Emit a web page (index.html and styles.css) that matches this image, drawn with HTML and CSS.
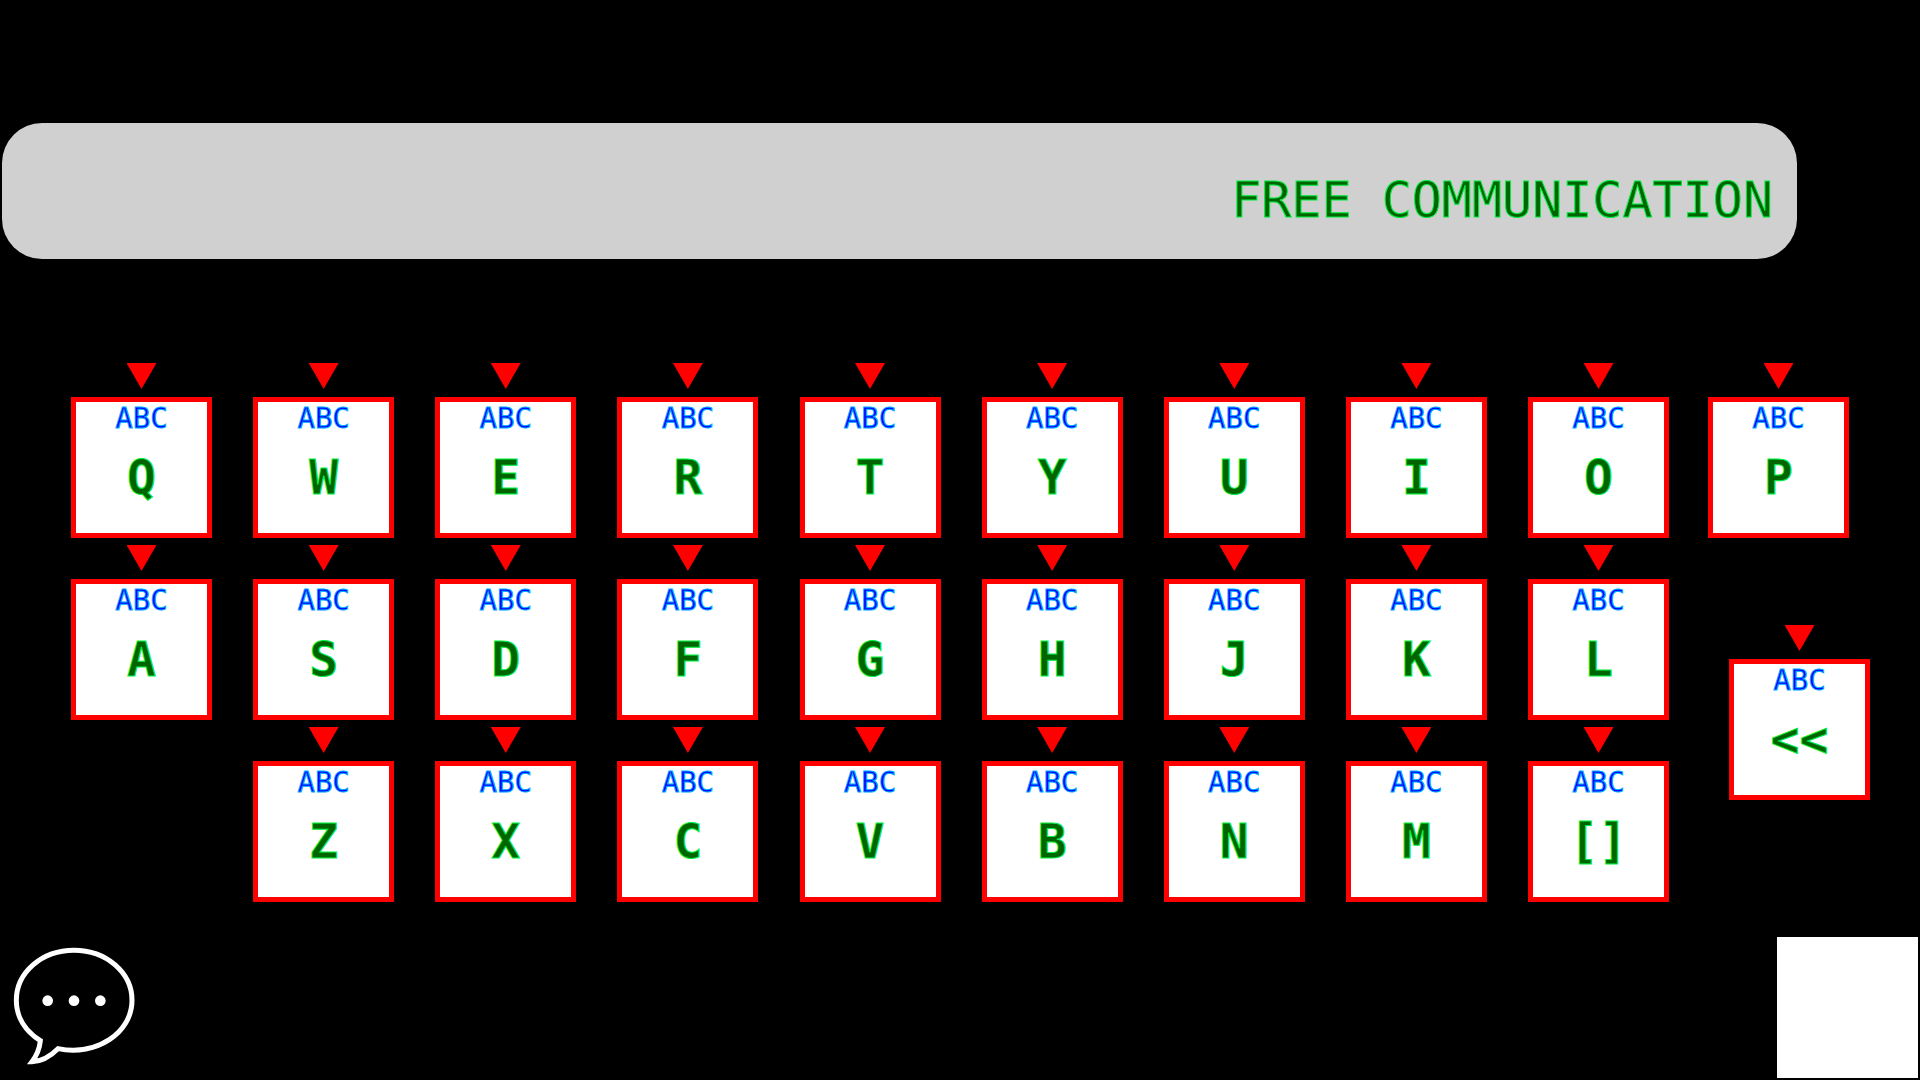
FILE: index.html
```html
<!DOCTYPE html>
<html lang="en">
<head>
<meta charset="utf-8">
<meta name="viewport" content="width=device-width, initial-scale=1">
<title>Free communication</title>
<link rel="stylesheet" href="styles.css">
</head>
<body>
<main class="board">
  <input class="message" type="text" value="FREE COMMUNICATION" aria-label="Message">

  <section class="keyboard" aria-label="Keyboard">
    <div class="letters">
      <div class="key"><button class="cap"><span class="hint">ABC</span><span class="glyph">Q</span></button></div>
      <div class="key"><button class="cap"><span class="hint">ABC</span><span class="glyph">W</span></button></div>
      <div class="key"><button class="cap"><span class="hint">ABC</span><span class="glyph">E</span></button></div>
      <div class="key"><button class="cap"><span class="hint">ABC</span><span class="glyph">R</span></button></div>
      <div class="key"><button class="cap"><span class="hint">ABC</span><span class="glyph">T</span></button></div>
      <div class="key"><button class="cap"><span class="hint">ABC</span><span class="glyph">Y</span></button></div>
      <div class="key"><button class="cap"><span class="hint">ABC</span><span class="glyph">U</span></button></div>
      <div class="key"><button class="cap"><span class="hint">ABC</span><span class="glyph">I</span></button></div>
      <div class="key"><button class="cap"><span class="hint">ABC</span><span class="glyph">O</span></button></div>

      <div class="key"><button class="cap"><span class="hint">ABC</span><span class="glyph">A</span></button></div>
      <div class="key"><button class="cap"><span class="hint">ABC</span><span class="glyph">S</span></button></div>
      <div class="key"><button class="cap"><span class="hint">ABC</span><span class="glyph">D</span></button></div>
      <div class="key"><button class="cap"><span class="hint">ABC</span><span class="glyph">F</span></button></div>
      <div class="key"><button class="cap"><span class="hint">ABC</span><span class="glyph">G</span></button></div>
      <div class="key"><button class="cap"><span class="hint">ABC</span><span class="glyph">H</span></button></div>
      <div class="key"><button class="cap"><span class="hint">ABC</span><span class="glyph">J</span></button></div>
      <div class="key"><button class="cap"><span class="hint">ABC</span><span class="glyph">K</span></button></div>
      <div class="key"><button class="cap"><span class="hint">ABC</span><span class="glyph">L</span></button></div>

      <div class="key key-indent"><button class="cap"><span class="hint">ABC</span><span class="glyph">Z</span></button></div>
      <div class="key"><button class="cap"><span class="hint">ABC</span><span class="glyph">X</span></button></div>
      <div class="key"><button class="cap"><span class="hint">ABC</span><span class="glyph">C</span></button></div>
      <div class="key"><button class="cap"><span class="hint">ABC</span><span class="glyph">V</span></button></div>
      <div class="key"><button class="cap"><span class="hint">ABC</span><span class="glyph">B</span></button></div>
      <div class="key"><button class="cap"><span class="hint">ABC</span><span class="glyph">N</span></button></div>
      <div class="key"><button class="cap"><span class="hint">ABC</span><span class="glyph">M</span></button></div>
      <div class="key"><button class="cap"><span class="hint">ABC</span><span class="glyph">[]</span></button></div>
    </div>
    <div class="side">
      <div class="key"><button class="cap"><span class="hint">ABC</span><span class="glyph">P</span></button></div>
      <div class="key key-delete"><button class="cap"><span class="hint">ABC</span><span class="glyph">&lt;&lt;</span></button></div>
    </div>
  </section>

  <footer class="tools">
    <button class="speak" aria-label="Speak">
      <svg class="bubble" viewBox="40 50 369 354" aria-hidden="true">
        <path d="M175 355C290 378 397 308 397 210C397 127 320 60 223 60C126 60 50 127 50 210C50 260 77 303 122 331C120 352 112 374 97 394C127 393 153 377 175 355Z" fill="none" stroke="#fff" stroke-width="15"/>
        <circle cx="144" cy="211" r="16" fill="#fff"/>
        <circle cx="223" cy="211" r="16" fill="#fff"/>
        <circle cx="302" cy="211" r="16" fill="#fff"/>
      </svg>
    </button>
    <button class="blank" aria-label="Blank"></button>
  </footer>
</main>
</body>
</html>
```
FILE: styles.css
```css
* {
  box-sizing: border-box;
}

body {
  margin: 0;
  background: #000;
  font-family: "DejaVu Sans Mono", monospace;
}

button {
  margin: 0;
  padding: 0;
  border: 0;
  font-family: inherit;
}

.board {
  display: flex;
  flex-direction: column;
  min-height: 100vh;
  padding: 123px 2px 2px;
}

.message {
  height: 136px;
  margin-right: 121px;
  padding: 18px 24px 0;
  border: 0;
  border-radius: 40px;
  background: #d0d0d0;
  color: #006400;
  font-family: inherit;
  font-size: 50px;
  text-align: right;
  -webkit-text-stroke: 1px #00f040;
}

.keyboard {
  display: flex;
  gap: 39px;
  margin-top: 104px;
  padding: 0 48px 0 69px;
}

.letters {
  flex: 1;
  display: grid;
  grid-template-columns: repeat(9, 141px);
  justify-content: space-between;
  row-gap: 7px;
}

.side {
  display: flex;
  flex-direction: column;
  gap: 87px;
  width: 162px;
}

.key {
  display: flex;
  flex-direction: column;
  align-items: center;
  gap: 8px;
  width: 141px;
}

.key::before {
  content: "";
  width: 30px;
  height: 26px;
  background: #f00;
  clip-path: polygon(0 0, 100% 0, 50% 100%);
}

.key-indent {
  grid-column: 2;
}

.key-delete {
  align-self: flex-end;
}

.cap {
  display: flex;
  flex-direction: column;
  align-items: center;
  width: 141px;
  height: 141px;
  border: 5px solid #f00;
  background: #fff;
}

.hint {
  color: #00f;
  font-size: 29px;
  line-height: 32px;
  -webkit-text-stroke: 1px #0af;
}

.glyph {
  margin-top: 15px;
  color: #006400;
  font-size: 48px;
  font-weight: bold;
  line-height: 56px;
  -webkit-text-stroke: 1px #00f040;
}

.tools {
  display: flex;
  align-items: flex-end;
  justify-content: space-between;
  margin-top: auto;
}

.speak {
  margin: 0 0 13px 11px;
  background: none;
}

.bubble {
  display: block;
  width: 123px;
  height: 118px;
}

.blank {
  width: 141px;
  height: 141px;
  background: #fff;
}
```
